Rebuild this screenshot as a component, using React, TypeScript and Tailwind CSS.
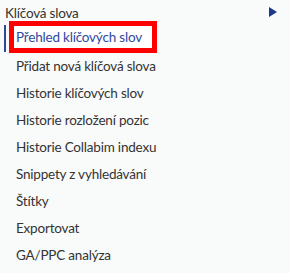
import React from "react";

const items = [
  "Přidat nová klíčová slova",
  "Historie klíčových slov",
  "Historie rozložení pozic",
  "Historie Collabim indexu",
  "Snippety z vyhledávání",
  "Štítky",
  "Exportovat",
  "GA/PPC analýza",
];

export default function App() {
  return (
    <div
      className="w-[290px] h-[273px] bg-[#f9fbfa] text-[#333333] overflow-hidden tracking-[-0.2px]"
      style={{ fontFamily: "Lato, 'Noto Sans', sans-serif" }}
    >
      <div className="flex items-start justify-between h-[21px] pt-[4px] pl-[5px] pr-[13px] text-[13.5px] leading-[18px]">
        <span>Klíčová slova</span>
        <svg width="8" height="10" viewBox="0 0 8 10" className="mt-[3px]">
          <polygon points="0,0 8,5 0,10" fill="#1d3a8a" />
        </svg>
      </div>
      <div className="relative flex items-center h-[32px]">
        <div className="absolute left-[4px] top-[4px] h-[27px] w-[2px] bg-[#2d4a9a]" />
        <div className="ml-[9px] w-[148px] h-[32px] border-[5px] border-[#ff0000] bg-white flex items-center pl-[2px] text-[13.5px] text-[#2d4aa0] whitespace-nowrap">
          Přehled klíčových slov
        </div>
      </div>
      <div className="flex flex-col pt-[0px]">
        {items.map((t) => (
          <div key={t} className="h-[27px] flex items-center pl-[16px] text-[13.5px]">
            {t}
          </div>
        ))}
      </div>
    </div>
  );
}
